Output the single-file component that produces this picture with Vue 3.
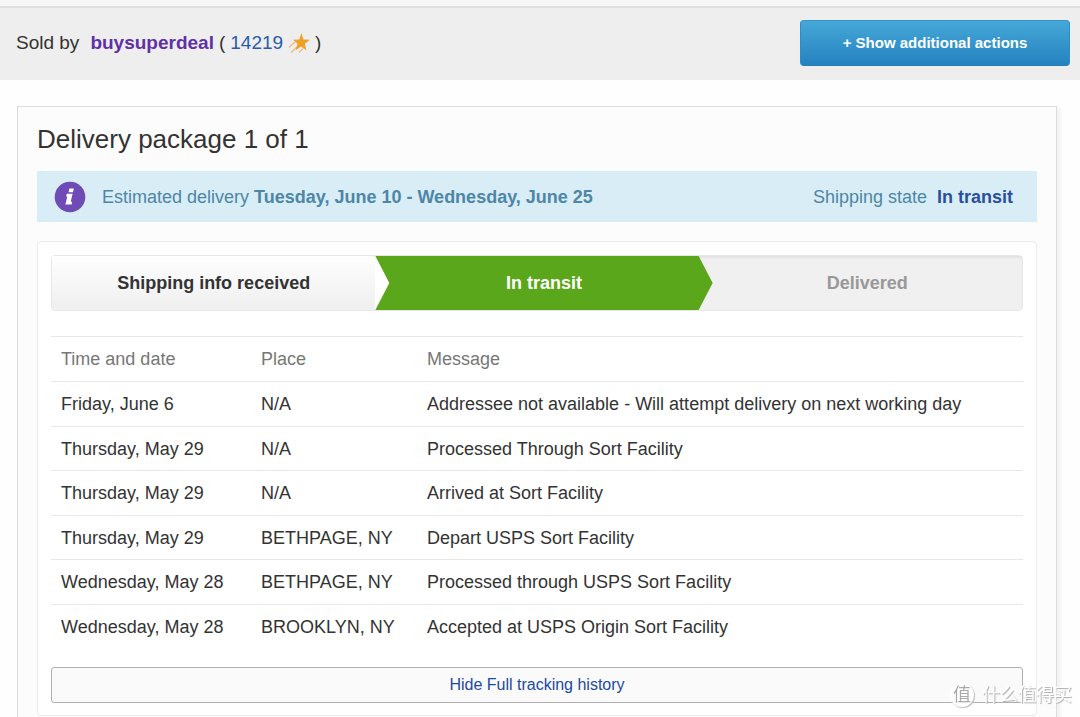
<script setup>
const steps = [
  { label: 'Shipping info received', state: 'done' },
  { label: 'In transit', state: 'current' },
  { label: 'Delivered', state: 'pending' },
]

const events = [
  { date: 'Friday, June 6', place: 'N/A', message: 'Addressee not available - Will attempt delivery on next working day' },
  { date: 'Thursday, May 29', place: 'N/A', message: 'Processed Through Sort Facility' },
  { date: 'Thursday, May 29', place: 'N/A', message: 'Arrived at Sort Facility' },
  { date: 'Thursday, May 29', place: 'BETHPAGE, NY', message: 'Depart USPS Sort Facility' },
  { date: 'Wednesday, May 28', place: 'BETHPAGE, NY', message: 'Processed through USPS Sort Facility' },
  { date: 'Wednesday, May 28', place: 'BROOKLYN, NY', message: 'Accepted at USPS Origin Sort Facility' },
]
</script>

<template>
  <div class="page">
    <header class="seller-bar">
      <p class="seller">
        <span class="sold-by">Sold by</span>
        <a class="seller-name" href="#">buysuperdeal</a>
        <span class="paren">(</span>
        <a class="score" href="#">14219</a>
        <svg class="star" viewBox="0 0 22 22" aria-hidden="true">
          <g stroke="#f0b98c" stroke-width="1.3" fill="none">
            <path d="M1 15.5 7 10" />
            <path d="M3 20.5 10 14" />
            <path d="M11 20.5 15 16.5" />
          </g>
          <path fill="#f0a024" d="M13.4 1 15.4 7.6 22 7.8 16.8 11.8 18.4 18.2 13.1 14.6 7.6 18.2 9.6 11.8 5 7.8 11.3 7.6Z" />
        </svg>
        <span>)</span>
      </p>
      <button class="actions" type="button">+ Show additional actions</button>
    </header>

    <main class="package">
      <h1 class="title">Delivery package 1 of 1</h1>

      <section class="estimate">
        <svg class="info" viewBox="0 0 32 32" aria-hidden="true">
          <circle cx="16" cy="16" r="15.3" fill="#6f4bb5" />
          <path fill="#fff" d="M15.4 7.6h4.4l-.8 3.6h-4.4zM12.8 12.8h5.8l-1.9 8h1.5l-.6 2.6h-6.2l1.9-8h-1.2z" />
        </svg>
        <p class="estimate-text">Estimated delivery <strong>Tuesday, June 10 - Wednesday, June 25</strong></p>
        <p class="state">Shipping state <a href="#">In transit</a></p>
      </section>

      <section class="tracking">
        <ol class="steps">
          <li v-for="step in steps" :key="step.label" class="step" :class="step.state">{{ step.label }}</li>
        </ol>

        <table class="history">
          <thead>
            <tr>
              <th class="col-date" scope="col">Time and date</th>
              <th class="col-place" scope="col">Place</th>
              <th scope="col">Message</th>
            </tr>
          </thead>
          <tbody>
            <tr v-for="(event, i) in events" :key="i">
              <td>{{ event.date }}</td>
              <td>{{ event.place }}</td>
              <td>{{ event.message }}</td>
            </tr>
          </tbody>
        </table>

        <button class="toggle" type="button">Hide Full tracking history</button>
      </section>
    </main>

    <div class="watermark">
      <span class="seal">值</span>
      <span>什么值得买</span>
    </div>
  </div>
</template>

<style>
body {
  background: #fefefe;
}
</style>

<style scoped>
.page {
  display: flex;
  flex-direction: column;
  min-height: 100vh;
  box-sizing: border-box;
  border-top: 6px solid #f7f7f7;
  font-family: "Liberation Sans", Arial, "Noto Sans CJK SC", sans-serif;
  font-size: 18px;
  line-height: 24px;
  color: #333;
}

a {
  text-decoration: none;
}

p,
ol {
  margin: 0;
  padding: 0;
}

.seller-bar {
  display: flex;
  align-items: center;
  justify-content: space-between;
  height: 74px;
  box-sizing: border-box;
  padding: 0 10px 2px 16px;
  border-top: 2px solid #e0e0e0;
  background: #eee;
}

.seller {
  display: flex;
  align-items: center;
  gap: 5px;
  font-size: 19px;
}

.sold-by {
  margin-right: 6px;
}

.seller-name {
  font-weight: bold;
  color: #6030a8;
}

.score {
  color: #2a5caa;
}

.star {
  width: 22px;
  height: 22px;
}

.actions {
  width: 270px;
  height: 46px;
  border: 1px solid;
  border-color: #3b93c4 #2f8cc4 #2380bb;
  border-radius: 4px;
  background: linear-gradient(#46a8d8, #2482bf);
  font: bold 15px/24px "Liberation Sans", Arial, sans-serif;
  color: #fff;
}

.package {
  flex: 1;
  margin: 26px 23px 0 17px;
  padding: 0 19px;
  border: 1px solid #dcdcdc;
  border-bottom: 0;
  background: #fcfcfc;
  box-shadow: 4px 2px 3px #f3f3f3;
}

.title {
  margin: 0;
  padding: 16px 0;
  font-size: 26px;
  font-weight: normal;
  line-height: 32px;
}

.estimate {
  display: flex;
  align-items: center;
  height: 51px;
  padding: 0 24px 0 17px;
  background: #d9edf7;
  color: #4d86a6;
}

.info {
  width: 32px;
  height: 32px;
  margin-right: 16px;
}

.estimate-text {
  flex: 1;
}

.state a {
  margin-left: 5px;
  font-weight: bold;
  color: #2850a0;
}

.tracking {
  margin-top: 19px;
  padding: 13px 13px 12px;
  border: 1px solid #ebebeb;
  border-radius: 4px;
  background: #fff;
}

.steps {
  display: grid;
  grid-template-columns: repeat(3, 1fr);
  height: 56px;
  box-sizing: border-box;
  border: 1px solid #e8e8e8;
  border-radius: 4px;
  list-style: none;
  font-weight: bold;
  line-height: 54px;
  text-align: center;
}

.step.done {
  background: linear-gradient(#fefefe, #efefef);
}

.step.current {
  z-index: 1;
  margin-right: -14px;
  background: #5ba71b;
  color: #fff;
  clip-path: polygon(0 0, calc(100% - 14px) 0, 100% 50%, calc(100% - 14px) 100%, 0 100%, 14px 50%);
}

.step.pending {
  padding-left: 14px;
  background: #f0f0f0;
  box-shadow: inset 0 2px 2px #e2e2e2;
  color: #999;
}

.history {
  width: 100%;
  margin-top: 25px;
  border-collapse: separate;
  border-spacing: 0;
  table-layout: fixed;
}

.history th,
.history td {
  height: 45px;
  box-sizing: border-box;
  padding: 0 10px;
  border-top: 1px solid #e8e8e8;
  font-weight: normal;
  text-align: left;
  white-space: nowrap;
}

.history tbody tr:nth-child(even) td {
  height: 44px;
}

.history th {
  color: #777;
}

.col-date {
  width: 200px;
}

.col-place {
  width: 166px;
}

.toggle {
  display: block;
  width: 100%;
  height: 36px;
  margin-top: 19px;
  border: 1px solid #b0b0b0;
  border-radius: 3px;
  background: #fafafa;
  font: 16px/24px "Liberation Sans", Arial, sans-serif;
  color: #1c4a9e;
}

.watermark {
  position: fixed;
  right: 8px;
  bottom: 10px;
  z-index: 2;
  display: flex;
  align-items: center;
  gap: 8px;
  font-size: 18px;
  color: #fff;
  text-shadow: 1px 1px 1px #aaa;
}

.seal {
  width: 24px;
  height: 24px;
  border-radius: 50%;
  background: #fff;
  box-shadow: 1px 1px 1px #bbb;
  color: #aaa;
  text-align: center;
  text-shadow: none;
}
</style>
